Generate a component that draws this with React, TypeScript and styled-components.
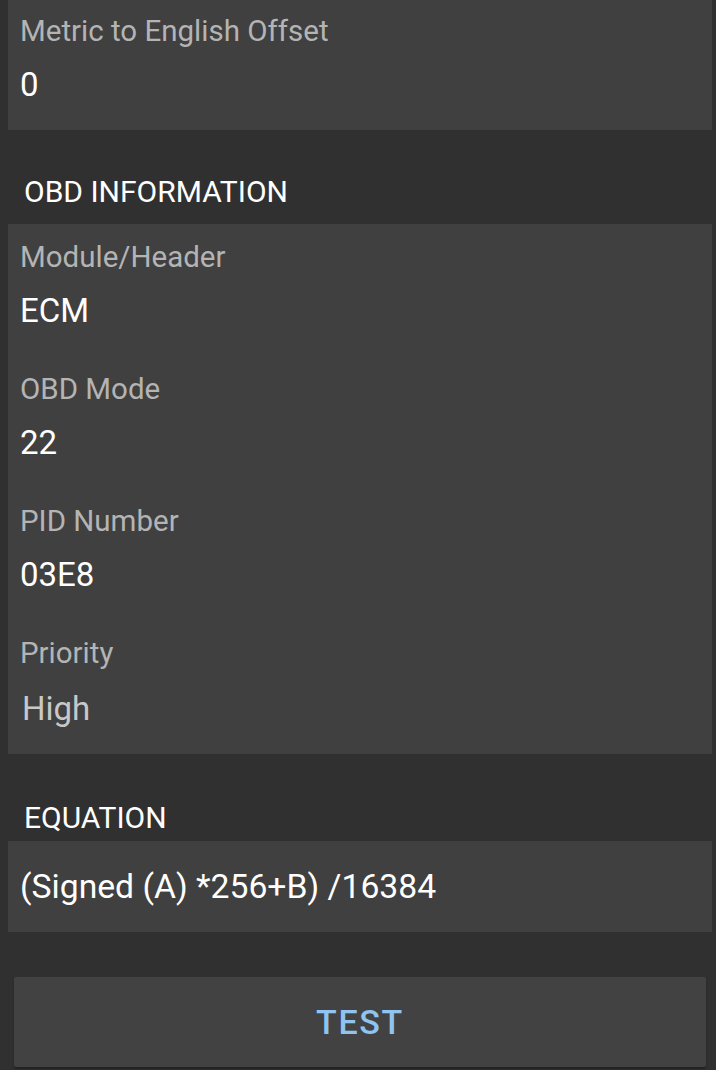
import * as React from 'react';
import styled, { createGlobalStyle } from 'styled-components';

const GlobalStyle = createGlobalStyle`
  html, body {
    margin: 0;
    padding: 0;
    background-color: #303030;
  }
  body {
    font-family: Roboto, "Noto Sans", sans-serif;
  }
`;

const Screen = styled.div`
  width: 716px;
  height: 1070px;
  overflow: hidden;
  background-color: #303030;
  display: flex;
  flex-direction: column;
`;

const Card = styled.div<{ $top: number; $bottom: number; $shift?: number }>`
  margin: ${(p) => p.$shift ?? 0}px 4px 0 8px;
  padding: ${(p) => p.$top}px 12px ${(p) => p.$bottom}px 12px;
  background-color: #404040;
  display: flex;
  flex-direction: column;
`;

const Field = styled.div`
  display: flex;
  flex-direction: column;
  & + & {
    margin-top: 42px;
  }
`;

const Label = styled.div`
  font-size: 29.5px;
  line-height: 32px;
  color: #b4b4b4;
`;

const Value = styled.div<{ $dim?: boolean }>`
  margin-top: ${(p) => (p.$dim ? 20 : 18)}px;
  padding-left: ${(p) => (p.$dim ? 2 : 0)}px;
  font-size: 33px;
  line-height: 40px;
  color: ${(p) => (p.$dim ? '#c8c8c8' : '#ffffff')};
`;

const SectionTitle = styled.div<{ $top: number; $bottom: number }>`
  margin: ${(p) => p.$top}px 0 ${(p) => p.$bottom}px 24px;
  font-size: 30px;
  line-height: 36px;
  color: #ffffff;
  text-transform: uppercase;
`;

const EquationCard = styled.div`
  margin: 0 4px 0 8px;
  height: 91px;
  padding: 0 12px;
  background-color: #404040;
  display: flex;
  align-items: center;
  font-size: 33.7px;
  color: #ffffff;
`;

const TestButton = styled.button`
  margin: 45px 10px 0 14px;
  height: 90px;
  border: none;
  border-radius: 2px;
  background-color: #424242;
  box-shadow: 0 2px 2px rgba(0, 0, 0, 0.3);
  font-family: Roboto, "Noto Sans", sans-serif;
  font-weight: 500;
  font-size: 34px;
  letter-spacing: 0.05em;
  color: #90c4f0;
  text-transform: uppercase;
  cursor: pointer;
`;

type Item = { label: string; value: string; dim?: boolean };

const obdFields: Item[] = [
  { label: 'Module/Header', value: 'ECM' },
  { label: 'OBD Mode', value: '22' },
  { label: 'PID Number', value: '03E8' },
  { label: 'Priority', value: 'High', dim: true },
];

const App = () => (
  <>
    <GlobalStyle />
    <Screen>
      <Card $top={17} $bottom={25} $shift={-2}>
        <Field>
          <Label>Metric to English Offset</Label>
          <Value>0</Value>
        </Field>
      </Card>

      <SectionTitle $top={44} $bottom={14}>OBD Information</SectionTitle>
      <Card $top={17} $bottom={25}>
        {obdFields.map((f) => (
          <Field key={f.label}>
            <Label>{f.label}</Label>
            <Value $dim={f.dim}>{f.value}</Value>
          </Field>
        ))}
      </Card>

      <SectionTitle $top={46} $bottom={5}>Equation</SectionTitle>
      <EquationCard>(Signed (A) *256+B) /16384</EquationCard>

      <TestButton>Test</TestButton>
    </Screen>
  </>
);

export default App;
